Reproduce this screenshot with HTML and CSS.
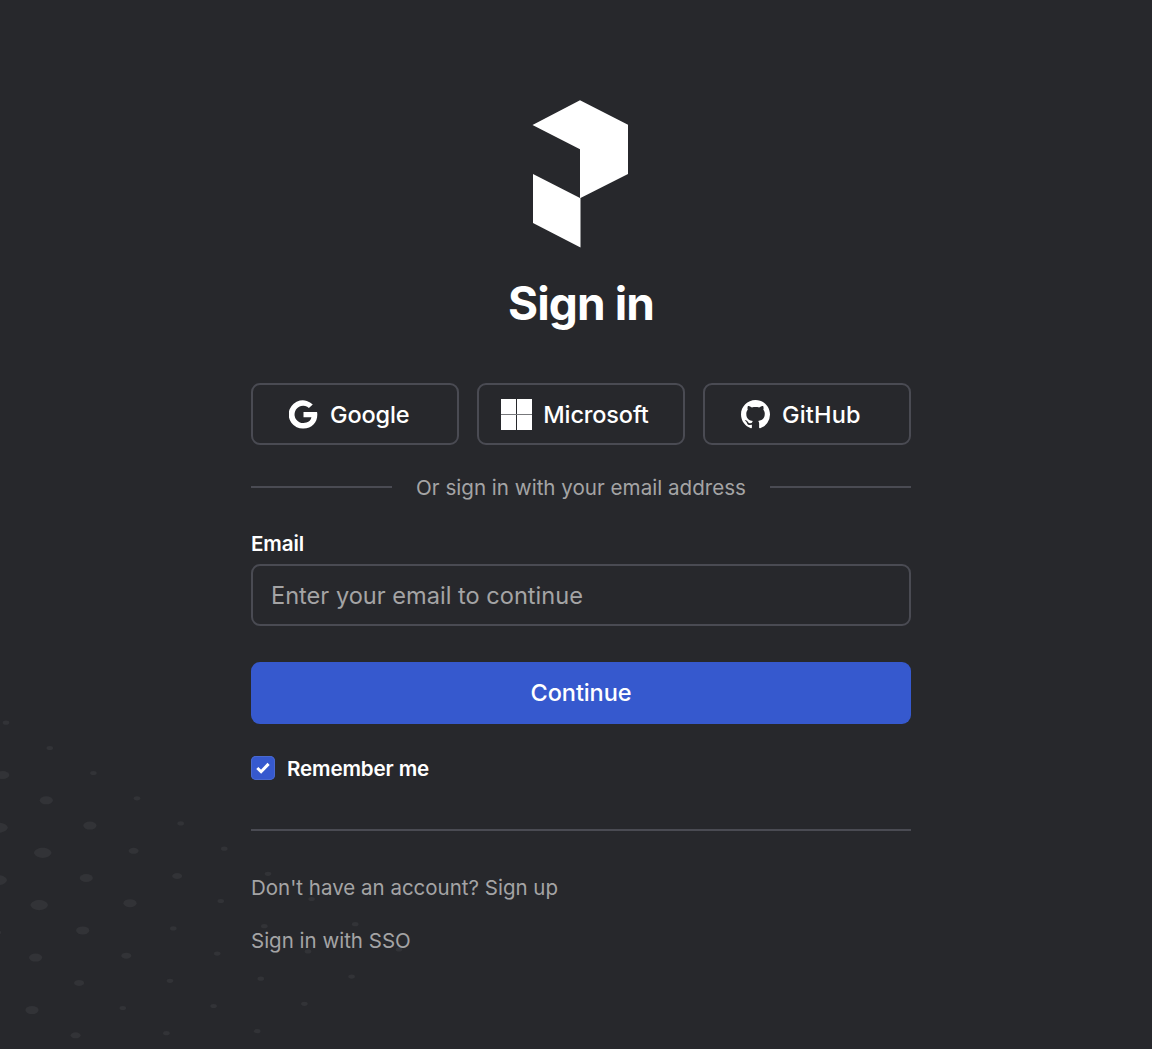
FILE: index.html
```html
<!DOCTYPE html>
<html lang="en">
<head>
<meta charset="utf-8">
<title>Sign in</title>
<link rel="stylesheet" href="styles.css">
</head>
<body>
<svg class="backdrop" viewBox="0 0 420 349" aria-hidden="true">
  <defs>
    <ellipse id="s" rx="3.3" ry="2.1"/>
    <ellipse id="m" rx="5" ry="3"/>
    <ellipse id="l" rx="6.6" ry="4"/>
    <path id="x" d="M-8.8 0C-8.3-3-4-5 0-5S8.3-3 8.8 0C8.3 3 4 5.2 0 5.2S-8.3 3-8.8 0Z"/>
  </defs>
  <use href="#s" x="6" y="22.7"/><use href="#s" x="49.8" y="48"/><use href="#s" x="93.4" y="73"/><use href="#s" x="137" y="98.3"/><use href="#s" x="180.7" y="123.4"/><use href="#s" x="224.3" y="148.7"/><use href="#s" x="268" y="173.8"/><use href="#s" x="311.6" y="199"/><use href="#s" x="355.2" y="224.2"/><use href="#s" x="399" y="249.5"/>
  <use href="#l" x="2.7" y="75"/><use href="#l" x="46.3" y="100.3"/><use href="#l" x="89.9" y="125.6"/><use href="#m" x="133.6" y="150.8"/><use href="#m" x="177.2" y="176"/><use href="#s" x="220.8" y="201"/><use href="#s" x="264.3" y="226.2"/><use href="#s" x="308" y="251.4"/><use href="#s" x="351.6" y="276.6"/>
  <use href="#x" x="-1" y="127.6"/><use href="#x" x="42.7" y="152.8"/><use href="#l" x="86.3" y="178"/><use href="#l" x="130" y="203.2"/><use href="#s" x="173.3" y="228.4"/><use href="#s" x="217.2" y="253.6"/><use href="#s" x="260.8" y="278.7"/><use href="#s" x="304.4" y="303.8"/>
  <use href="#x" x="-1.8" y="180"/><use href="#x" x="39.2" y="205.1"/><use href="#l" x="82.7" y="230.4"/><use href="#m" x="126.3" y="255.7"/><use href="#s" x="170" y="280.8"/><use href="#s" x="213.6" y="306"/><use href="#s" x="257.2" y="331.2"/>
  <use href="#m" x="-4" y="232.5"/><use href="#l" x="35.6" y="257.6"/><use href="#m" x="79.1" y="282.9"/><use href="#s" x="122.8" y="308"/><use href="#s" x="166.4" y="333.2"/>
  <use href="#l" x="32" y="310.1"/><use href="#m" x="75.6" y="335.3"/>
</svg>
<main class="signin">
  <svg class="logo" viewBox="0 0 96 148" role="img" aria-label="Logo">
    <path d="M0.5 25 48 .3 96 24.7V74L48 98.3V49.3ZM1 74 48.5 98.3V147.6L1 123Z"/>
  </svg>
  <h1 class="title">Sign in</h1>
  <div class="providers">
    <button class="provider" type="button">
      <svg class="icon google" viewBox="0 0 30 30"><path d="M24.6 4.6A14.6 14.6 0 1 0 15 29.5C23.5 29.5 29.3 23.5 29.3 15Q29.3 13.6 29 12.4H15V17.9H23.2C22.4 21.6 19.4 23.8 15 23.8A8.9 8.9 0 1 1 20.6 8.3Z"/></svg>
      <span>Google</span>
    </button>
    <button class="provider" type="button">
      <svg class="icon microsoft" viewBox="0 0 31 31"><path class="seam" d="M0 15H31V16H0Z"/><path d="M0 0H15V15H0ZM16 0H31V15H16ZM0 16H15V31H0ZM16 16H31V31H16Z"/></svg>
      <span>Microsoft</span>
    </button>
    <button class="provider" type="button">
      <svg class="icon github" viewBox="0 0 16 16"><path d="M8 0C3.58 0 0 3.58 0 8c0 3.54 2.29 6.53 5.47 7.59.4.07.55-.17.55-.38 0-.19-.01-.82-.01-1.49-2.01.37-2.53-.49-2.69-.94-.09-.23-.48-.94-.82-1.13-.28-.15-.68-.52-.01-.53.63-.01 1.08.58 1.23.82.72 1.21 1.87.87 2.33.66.07-.52.28-.87.51-1.07-1.78-.2-3.64-.89-3.64-3.95 0-.87.31-1.59.82-2.15-.08-.2-.36-1.02.08-2.12 0 0 .67-.21 2.2.82.64-.18 1.32-.27 2-.27s1.36.09 2 .27c1.53-1.04 2.2-.82 2.2-.82.44 1.1.16 1.92.08 2.12.51.56.82 1.27.82 2.15 0 3.07-1.87 3.75-3.65 3.95.29.25.54.73.54 1.48 0 1.07-.01 1.93-.01 2.2 0 .21.15.46.55.38A8.01 8.01 0 0 0 16 8c0-4.42-3.58-8-8-8Z"/></svg>
      <span class="github-text">GitHub</span>
    </button>
  </div>
  <div class="divider"><span>Or sign in with your email address</span></div>
  <form class="form">
    <label class="label" for="email"><span>Email</span></label>
    <input class="input" id="email" type="email" placeholder="Enter your email to continue">
    <button class="continue" type="button"><span>Continue</span></button>
    <label class="remember">
      <span class="check"><svg viewBox="0 0 24 24"><path d="m6.3 12 3.8 3.7 7.5-7.8"/></svg></span>
      <span>Remember me</span>
    </label>
  </form>
  <div class="links">
    <p><span>Don't have an account? Sign up</span></p>
    <p><span>Sign in with SSO</span></p>
  </div>
</main>
</body>
</html>
```
FILE: styles.css
```css
* { box-sizing: border-box; }
body {
  margin: 0;
  min-height: 1049px;
  background: #27282c;
  color: #fff;
  font-family: Inter, "Liberation Sans", sans-serif;
  overflow: hidden;
}
button, input { font: inherit; color: inherit; }
.backdrop {
  position: absolute;
  left: 0;
  bottom: 0;
  width: 420px;
  height: 349px;
  fill: #323337;
}
.signin {
  position: relative;
  width: 660px;
  margin-left: 251px;
  padding-top: 100px;
  display: flex;
  flex-direction: column;
}
.logo { width: 96px; height: 148px; margin-left: 281px; fill: #fff; }
.title {
  margin: 27px 0 0;
  font-size: 46px;
  line-height: 56px;
  font-weight: 700;
  letter-spacing: -0.9px;
  text-align: center;
}
.providers {
  display: grid;
  grid-template-columns: repeat(3, 1fr);
  gap: 17.5px;
  margin-top: 52px;
}
.provider {
  height: 62px;
  padding: 0 12px 0 0;
  display: flex;
  align-items: center;
  justify-content: center;
  gap: 12px;
  background: transparent;
  border: 2px solid #4a4b53;
  border-radius: 9px;
  font-size: 23.5px;
  font-weight: 500;
  letter-spacing: -0.15px;
}
.icon { width: 29px; height: 29px; fill: #fff; flex: none; }
.microsoft { width: 31px; height: 31px; margin-right: -1px; }
.github-text { letter-spacing: 0.15px; }
.seam { fill: #77787b; }
.divider {
  display: flex;
  align-items: center;
  gap: 24px;
  height: 30px;
  margin-top: 27px;
  color: #a4a4a5;
  font-size: 20.6px;
}
.divider span { padding-top: 1px; }
.divider::before, .divider::after {
  content: "";
  flex: 1;
  height: 2px;
  background: #4a4b53;
}
.form { display: flex; flex-direction: column; }
.label {
  margin-top: 28px;
  height: 34px;
  line-height: 28px;
  font-size: 20.6px;
  font-weight: 600;
  letter-spacing: -0.1px;
}
.input {
  height: 62px;
  padding: 0 18px;
  background: transparent;
  border: 2px solid #4a4b53;
  border-radius: 9px;
  font-size: 23.6px;
}
.input::placeholder { color: #a4a4a5; opacity: 1; }
.continue {
  height: 62px;
  margin-top: 35.5px;
  border: 0;
  border-radius: 9px;
  background: #3659ce;
  font-size: 23.5px;
  font-weight: 500;
  letter-spacing: -0.1px;
}
.remember {
  display: flex;
  align-items: center;
  gap: 12px;
  height: 30px;
  margin-top: 29.5px;
  font-size: 20.6px;
  font-weight: 600;
  letter-spacing: -0.15px;
}
.check {
  width: 24px;
  height: 24px;
  border-radius: 5px;
  background: #3659ce;
  box-shadow: inset 0 0 0 1px #4969cf;
}
.check svg {
  display: block;
  width: 24px;
  height: 24px;
  fill: none;
  stroke: #fff;
  stroke-width: 3;
}
.links {
  margin-top: 46px;
  border-top: 2px solid #4a4b53;
  padding-top: 43px;
  color: #a4a4a5;
  font-size: 20.5px;
  line-height: 28px;
}
.links p { margin: 0 0 25px; }
```
